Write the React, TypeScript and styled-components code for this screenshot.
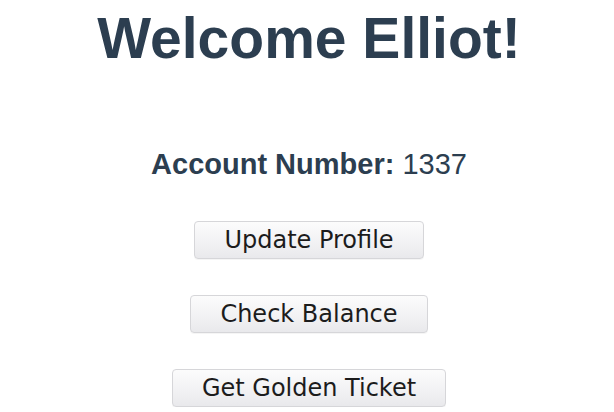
import React from "react";
import styled, { createGlobalStyle } from "styled-components";

const GlobalStyle = createGlobalStyle`
  html, body {
    margin: 0;
    padding: 0;
    background: #ffffff;
  }
`;

const Dashboard = () => {
  const user = { name: "Elliot", account: 1337 };

  return (
    <>
      <GlobalStyle />
      <Page>
        <Title>Welcome {user.name}!</Title>

        <AccountLine>
          <strong>Account Number:</strong> {user.account}
        </AccountLine>

        <Actions>
          <Action>Update Profile</Action>
          <Action>Check Balance</Action>
          <Action>Get Golden Ticket</Action>
        </Actions>
      </Page>
    </>
  );
};

export default Dashboard;

const Page = styled.div`
  display: flex;
  flex-direction: column;
  align-items: center;
  padding: 5px 0 0 4px;
  color: #2c3e50;
  font-family: "Liberation Sans", Arial, sans-serif;
  text-align: center;
`;

const Title = styled.h1`
  margin: 0;
  font-size: 57px;
  font-weight: 700;
  line-height: normal;
`;

const AccountLine = styled.p`
  margin: 77px 0 0 0;
  font-size: 29px;
  line-height: normal;

  strong {
    font-weight: 700;
  }
`;

const Actions = styled.div`
  display: flex;
  flex-direction: column;
  align-items: center;
  gap: 36px;
  margin-top: 40px;
`;

const Action = styled.button`
  height: 38px;
  padding: 0 29px;
  font-family: "DejaVu Sans", Verdana, sans-serif;
  font-size: 24px;
  color: #1c1c1c;
  background: linear-gradient(to bottom, #fcfcfc 0%, #f1f1f3 60%, #e9e9ec 100%);
  border: 1px solid #d6d6d9;
  border-radius: 4px;
  box-shadow: 0 1px 0 rgba(0, 0, 0, 0.04);
  cursor: pointer;
`;
